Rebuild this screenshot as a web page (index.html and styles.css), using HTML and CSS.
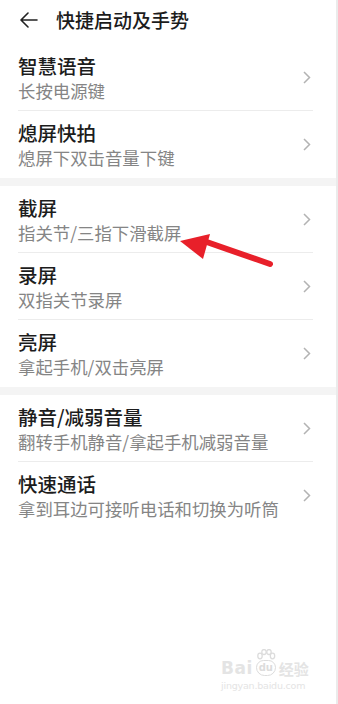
FILE: index.html
```html
<!DOCTYPE html>
<html lang="zh-CN">
<head>
<meta charset="utf-8">
<link rel="stylesheet" href="styles.css">
</head>
<body>
<div class="page">
  <main class="main">
    <header class="header">
      <svg class="back" width="18" height="16" viewBox="0 0 18 16"><path d="M17 8H1.5M8 1L1 8l7 7" fill="none" stroke="#222" stroke-width="1.6" stroke-linecap="round" stroke-linejoin="round"/></svg>
      <h1 class="title">快捷启动及手势</h1>
    </header>

    <section class="group">
      <div class="row"><div class="txt"><div class="t">智慧语音</div><div class="s">长按电源键</div></div><svg class="chev" width="8" height="13" viewBox="0 0 8 13"><path d="M1 1l5.5 5.5L1 12" fill="none" stroke="#b3b3b3" stroke-width="1.5"/></svg></div>
      <div class="row last"><div class="txt"><div class="t">熄屏快拍</div><div class="s">熄屏下双击音量下键</div></div><svg class="chev" width="8" height="13" viewBox="0 0 8 13"><path d="M1 1l5.5 5.5L1 12" fill="none" stroke="#b3b3b3" stroke-width="1.5"/></svg></div>
    </section>
    <div class="band"></div>
    <section class="group">
      <div class="row"><div class="txt"><div class="t">截屏</div><div class="s">指关节/三指下滑截屏</div></div><svg class="chev" width="8" height="13" viewBox="0 0 8 13"><path d="M1 1l5.5 5.5L1 12" fill="none" stroke="#b3b3b3" stroke-width="1.5"/></svg></div>
      <div class="row"><div class="txt"><div class="t">录屏</div><div class="s">双指关节录屏</div></div><svg class="chev" width="8" height="13" viewBox="0 0 8 13"><path d="M1 1l5.5 5.5L1 12" fill="none" stroke="#b3b3b3" stroke-width="1.5"/></svg></div>
      <div class="row last"><div class="txt"><div class="t">亮屏</div><div class="s">拿起手机/双击亮屏</div></div><svg class="chev" width="8" height="13" viewBox="0 0 8 13"><path d="M1 1l5.5 5.5L1 12" fill="none" stroke="#b3b3b3" stroke-width="1.5"/></svg></div>
    </section>
    <div class="band"></div>
    <section class="group">
      <div class="row"><div class="txt"><div class="t">静音/减弱音量</div><div class="s">翻转手机静音/拿起手机减弱音量</div></div><svg class="chev" width="8" height="13" viewBox="0 0 8 13"><path d="M1 1l5.5 5.5L1 12" fill="none" stroke="#b3b3b3" stroke-width="1.5"/></svg></div>
      <div class="row last"><div class="txt"><div class="t">快速通话</div><div class="s">拿到耳边可接听电话和切换为听筒</div></div><svg class="chev" width="8" height="13" viewBox="0 0 8 13"><path d="M1 1l5.5 5.5L1 12" fill="none" stroke="#b3b3b3" stroke-width="1.5"/></svg></div>
    </section>

    <svg class="arrow" width="100" height="40" viewBox="0 0 100 40">
      <path d="M25 12 L94 36" stroke="#e8202a" stroke-width="6" stroke-linecap="round"/>
      <path d="M4 13 L34 6 L27 31 Z" fill="#e8202a"/>
    </svg>

    <div class="wm">
      <div class="wm-top">
        <span class="bai">Bai</span>
        <span class="paw">
          <svg width="20" height="18" viewBox="0 0 20 18"><g fill="none" stroke="#dcdcdc" stroke-width="1.3"><ellipse cx="4" cy="7" rx="2.2" ry="2.8"/><ellipse cx="8" cy="3" rx="2.2" ry="2.5"/><ellipse cx="13" cy="3" rx="2.2" ry="2.5"/><ellipse cx="16.5" cy="7" rx="2.2" ry="2.8"/></g></svg>
          <span class="du">du</span>
        </span>
        <span class="jy">经验</span>
      </div>
      <div class="wm-url">jingyan.baidu.com</div>
    </div>
  </main>
  <div class="strip"></div>
</div>
</body>
</html>
```
FILE: styles.css
```css
* { box-sizing: border-box; margin: 0; padding: 0; }
html, body { width: 338px; height: 704px; overflow: hidden; background: #fff; }
body { font-family: "Noto Sans CJK SC", "Noto Sans", sans-serif; }
.page { display: flex; height: 704px; }
.main { position: relative; width: 336px; height: 704px; background: #fff; }
.strip { width: 2px; height: 704px; background: #ebebeb; }
.header { height: 44px; display: flex; align-items: center; padding-left: 20px; padding-bottom: 4px; }
.back { flex: none; }
.title { margin-left: 18px; font-size: 19px; font-weight: 500; color: #1c1c1c; line-height: 24px; }
.group { padding-left: 18px; }
.row { display: flex; align-items: center; height: 67px; border-bottom: 1px solid #ececec; margin-right: 23px; }
.row.last { border-bottom: none; height: 67px; }
.txt { flex: 1; padding-top: 1px; }
.t { font-size: 19.5px; font-weight: 500; color: #1c1c1c; line-height: 25px; }
.s { font-size: 17.4px; color: #858585; line-height: 25px; }
.chev { flex: none; margin-right: 2px; }
.band { height: 8px; background: #f4f4f4; }
.arrow { position: absolute; left: 176px; top: 228px; }
.wm { position: absolute; left: 221px; top: 649px; width: 90px; color: #e2e2e2; font-family: "DejaVu Sans", sans-serif; }
.wm-top { display: flex; align-items: flex-end; height: 28px; }
.bai { font-size: 17px; font-weight: bold; line-height: 17px; letter-spacing: 0.5px; color: #e4e4e4; }
.paw { position: relative; width: 22px; height: 28px; margin-left: 2px; }
.paw svg { position: absolute; left: 1px; top: 0; }
.du { position: absolute; left: 1px; top: 11px; width: 20px; height: 16px; border: 1.3px solid #dcdcdc; border-radius: 8px 8px 9px 9px; font-size: 10px; font-weight: bold; line-height: 13px; text-align: center; color: #dcdcdc; }
.jy { font-family: "Noto Sans CJK SC", sans-serif; font-size: 15px; font-weight: bold; line-height: 17px; margin-left: 2px; color: #e4e4e4; }
.wm-url { font-size: 9.5px; line-height: 12px; margin-top: 3px; color: #e4e4e4; letter-spacing: -0.2px; }
```
